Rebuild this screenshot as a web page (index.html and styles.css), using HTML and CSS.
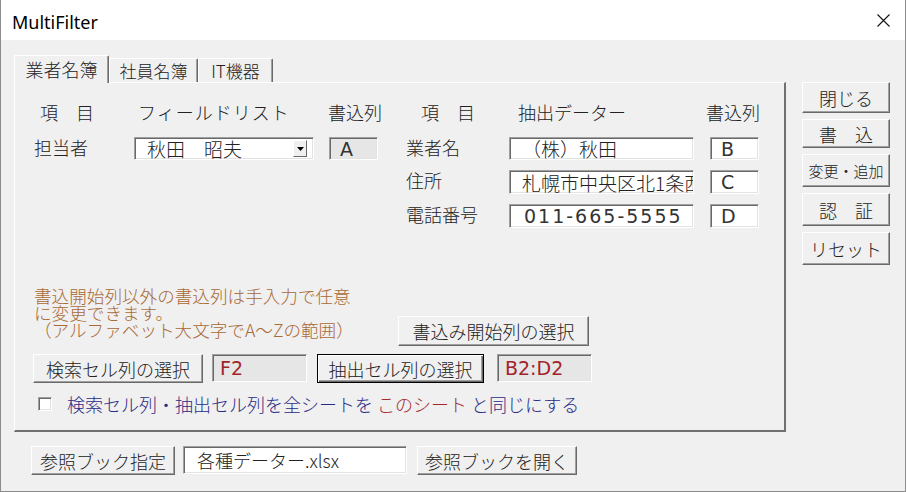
FILE: index.html
```html
<!DOCTYPE html>
<html lang="ja">
<head>
<meta charset="utf-8">
<title>MultiFilter</title>
<link rel="stylesheet" href="styles.css">
</head>
<body>
<div class="window">
  <div class="titlebar">
    <span class="title">MultiFilter</span>
    <span class="close"><svg width="13" height="13" viewBox="0 0 13 13"><path d="M0.5 0.5 L12.5 12.5 M12.5 0.5 L0.5 12.5" stroke="#111" stroke-width="1.1" fill="none"/></svg></span>
  </div>
  <div class="client">
    <div class="main">
      <div class="tabs">
        <div class="tab active">業者名簿</div>
        <div class="tab t2">社員名簿</div>
        <div class="tab t3">IT機器</div>
      </div>
      <div class="page">
        <div class="fields">
          <div class="grid left">
            <div class="hdr h-item">項　目</div>
            <div class="hdr h-list">フィールドリスト</div>
            <div class="hdr h-col">書込列</div>
            <div class="lbl">担当者</div>
            <div class="combo"><span class="combo-text">秋田　昭夫</span><span class="drop"><svg width="7" height="4" viewBox="0 0 7 4"><path d="M0 0H7L3.5 4Z" fill="#000"/></svg></span></div>
            <div class="cell gray latin">A</div>
          </div>
          <div class="grid right">
            <div class="hdr h-item2">項　目</div>
            <div class="hdr h-data">抽出データー</div>
            <div class="hdr h-col2">書込列</div>
            <div class="lbl">業者名</div>
            <div class="text">（株）秋田</div>
            <div class="cell latin">B</div>
            <div class="lbl">住所</div>
            <div class="text clip">札幌市中央区北1条西</div>
            <div class="cell latin">C</div>
            <div class="lbl">電話番号</div>
            <div class="text latin phone">011-665-5555</div>
            <div class="cell latin">D</div>
          </div>
        </div>
        <div class="notes">
          <p class="note">書込開始列以外の書込列は手入力で任意<br>に変更できます。<br>（アルファベット大文字でA～Zの範囲）</p>
          <button class="btn btn-start">書込み開始列の選択</button>
        </div>
        <div class="selrow">
          <button class="btn btn-search">検索セル列の選択</button>
          <div class="cell gray wide latin red">F2</div>
          <button class="btn btn-extract focused">抽出セル列の選択</button>
          <div class="cell gray wide latin red">B2:D2</div>
        </div>
        <div class="check">
          <span class="checkbox"></span>
          <span class="check-text">検索セル列・抽出セル列を全シートを <span class="accent">このシート</span> と同じにする</span>
        </div>
      </div>
      <div class="bookrow">
        <button class="btn btn-book">参照ブック指定</button>
        <div class="text book">各種データー.xlsx</div>
        <button class="btn btn-open">参照ブックを開く</button>
      </div>
    </div>
    <div class="side">
      <button class="btn side-btn s1">閉じる</button>
      <button class="btn side-btn s2">書　込</button>
      <button class="btn side-btn s3 small">変更・追加</button>
      <button class="btn side-btn s4">認　証</button>
      <button class="btn side-btn s5">リセット</button>
    </div>
  </div>
</div>
</body>
</html>
```
FILE: styles.css
```css
* { box-sizing: border-box; }
html, body { margin: 0; padding: 0; }
body {
  width: 907px;
  height: 492px;
  overflow: hidden;
  background: #fff;
  font-family: "Noto Sans CJK JP", "Noto Sans", sans-serif;
  font-weight: 300;
  color: #222;
}
.window {
  width: 906px;
  height: 492px;
  border: 1px solid #8c8c8c;
  border-top: none;
  display: flex;
  flex-direction: column;
}
.titlebar {
  height: 40px;
  flex: none;
  background: #fff;
  display: flex;
  align-items: center;
  justify-content: space-between;
  padding: 3px 15px 0 11px;
}
.title {
  font-family: "Noto Sans", sans-serif;
  font-weight: 400;
  font-size: 18px;
  color: #000;
}
.close { display: flex; margin-top: -3px; }
.client {
  flex: 1;
  background: #f0f0f0;
  display: flex;
  padding: 15px 0 0 13px;
}
.main { width: 772px; flex: none; }

/* tabs */
.tabs {
  height: 27px;
  display: flex;
  align-items: flex-end;
}
.tab {
  height: 24px;
  font-size: 17px;
  line-height: 22px;
  display: flex;
  align-items: center;
  justify-content: center;
  border-top: 1px solid #fff;
  border-left: 1px solid #fff;
  border-right: 1px solid #696969;
  box-shadow: inset -1px 0 #a0a0a0;
  border-radius: 2px 2px 0 0;
  background: #f0f0f0;
}
.tab.active {
  width: 95px;
  height: 28px;
  margin-bottom: -1px;
  font-size: 18px;
  position: relative;
  z-index: 1;
  padding-bottom: 2px;
}
.tab.t2 { width: 89px; }
.tab.t3 { width: 75px; }

.page {
  height: 350px;
  border-top: 1px solid #fff;
  border-left: 1px solid #fff;
  border-right: 2px solid #707070;
  border-bottom: 2px solid #707070;
  padding: 17px 0 0 19px;
}
.fields { display: flex; gap: 28px; }
.grid {
  display: grid;
  grid-template-rows: 27px 23px 24px 24px;
  row-gap: 10px;
  align-items: start;
}
.grid.left { grid-template-columns: 100px 195px 49px; }
.grid.right { grid-template-columns: 103px 201px 49px; }
.hdr { font-size: 18px; line-height: 24px; white-space: nowrap; }
.h-item { padding-left: 6px; }
.h-list { padding-left: 4px; letter-spacing: 1px; }
.h-col { margin-left: -1px; }
.h-item2 { padding-left: 15px; }
.h-data { padding-left: 9px; }
.h-col2 { margin-left: -4px; }
.lbl { font-size: 18px; line-height: 20px; white-space: nowrap; }

.combo, .text, .cell, .checkbox {
  border: 1px solid;
  border-color: #a0a0a0 #fff #fff #a0a0a0;
  box-shadow: inset 1px 1px #696969, inset -1px -1px #e3e3e3;
}
.combo {
  width: 180px;
  height: 23px;
  background: #fff;
  display: flex;
  align-items: center;
  padding-left: 12px;
  font-size: 19px;
  line-height: 21px;
}
.drop {
  margin-left: auto;
  margin-right: 6px;
  width: 14px;
  height: 17px;
  display: flex;
  align-items: center;
  justify-content: center;
  background: #f0f0f0;
  border: 1px solid;
  border-color: #fff #696969 #696969 #fff;
}
.text {
  align-self: stretch;
  width: 185px;
  background: #fff;
  font-size: 19px;
  line-height: 21px;
  padding-left: 12px;
  white-space: nowrap;
  display: flex;
  align-items: center;
}
.text.clip { overflow: hidden; }
.cell {
  align-self: stretch;
  width: 49px;
  background: #fff;
  font-size: 19px;
  padding-left: 10px;
  display: flex;
  align-items: center;
}
.cell.gray { background: #e6e6e6; }
.latin { font-family: "DejaVu Sans", "Noto Sans CJK JP", sans-serif; font-weight: 400; color: #333; }
.phone { letter-spacing: 2px; padding-left: 14px; }
.latin.red { color: #a3232b; }

.notes {
  margin-top: 59px;
  display: flex;
  align-items: flex-end;
}
.note {
  margin: 0 0 8px 0;
  width: 364px;
  font-size: 17.6px;
  line-height: 17px;
  color: #a86a36;
  white-space: nowrap;
}

.btn {
  font-family: "Noto Sans CJK JP", sans-serif;
  font-weight: 300;
  font-size: 18px;
  color: #222;
  background: #f0f0f0;
  border: 1px solid;
  border-color: #fff #696969 #696969 #fff;
  box-shadow: inset -1px -1px #a0a0a0;
  padding: 0;
  line-height: 20px;
  white-space: nowrap;
}
.btn.focused {
  border-color: #000;
  box-shadow: inset 1px 1px #fff, inset -1px -1px #696969, inset -2px -2px #a0a0a0;
}
.btn-start { width: 191px; height: 30px; }

.selrow {
  margin-top: 8px;
  margin-left: -1px;
  display: flex;
  align-items: flex-start;
}
.btn-search { width: 170px; height: 29px; }
.cell.wide { width: 95px; height: 28px; padding-left: 7px; margin-left: 9px; }
.btn-extract { width: 167px; height: 29px; margin-left: 10px; }
.btn-extract + .cell.wide { margin-left: 13px; }

.check {
  margin-top: 11px;
  display: flex;
  align-items: center;
  height: 20px;
}
.checkbox {
  width: 14px;
  height: 14px;
  background: #fff;
  margin-left: 4px;
  flex: none;
}
.check-text {
  margin-left: 15px;
  font-size: 18px;
  line-height: 20px;
  color: #2b2b85;
  white-space: nowrap;
}
.accent { color: #a3282d; }

.bookrow {
  margin-top: 14px;
  padding-left: 17px;
  display: flex;
  align-items: flex-start;
}
.btn-book { width: 144px; height: 29px; }
.text.book {
  width: 224px;
  height: 28px;
  margin-left: 8px;
  font-size: 18px;
  padding-left: 13px;
}
.btn-open { width: 160px; height: 29px; margin-left: 10px; }

.side {
  margin-left: 16px;
  width: 88px;
  padding-top: 27px;
  display: flex;
  flex-direction: column;
  gap: 6px;
}
.side-btn { width: 88px; height: 33px; }
.side-btn.s1 { height: 31px; }
.side-btn.s2 { height: 29px; }
.side-btn.small { font-size: 15px; }
```
